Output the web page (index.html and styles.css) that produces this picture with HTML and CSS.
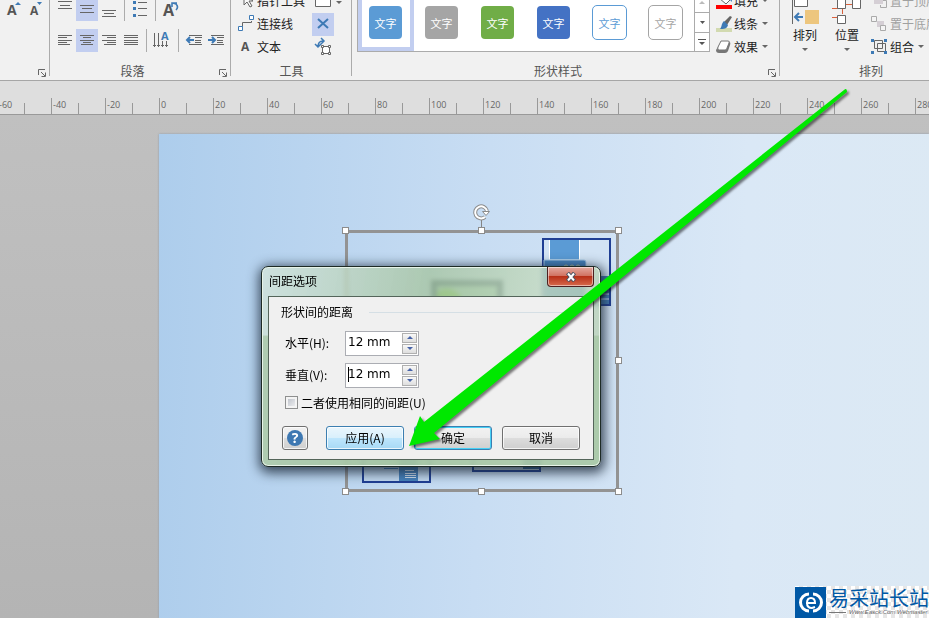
FILE: index.html
```html
<!DOCTYPE html>
<html lang="zh-CN">
<head>
<meta charset="utf-8">
<title>间距选项</title>
<link rel="stylesheet" href="styles.css">
</head>
<body>
<header class="ribbon">
  <section class="group group-font">
    <div class="group-body">
      <div class="row">
        <button class="tool" aria-label="增大字号"><svg width="22" height="23"><text class="glyph" x="5" y="17" font-size="14">A</text><path class="blue" d="M13 7l3-3 3 3z"/></svg></button>
        <button class="tool" aria-label="减小字号"><svg width="22" height="23"><text class="glyph" x="6" y="17" font-size="12">A</text><path class="blue" d="M13 4h5l-2.500 3z"/></svg></button>
      </div>
      <div class="row"></div>
    </div>
    <footer class="group-footer"><span class="group-name"></span><button class="launcher" aria-label="字体设置"><svg width="8" height="8"><path class="line" d="M.5 6V.5H7M3 3l4 4M7.500 3.500v4h-4"/></svg></button></footer>
  </section>

  <section class="group group-paragraph">
    <div class="group-body">
      <div class="row">
        <button class="tool" aria-label="顶端对齐"><svg width="22" height="23"><path class="line" d="M4 3.500h14M6 7.500h10M4 10.500h14"/></svg></button>
        <button class="tool selected" aria-label="中部对齐"><svg width="22" height="23"><path class="line" d="M4 7.500h14M6 10.500h10M4 14.500h14"/></svg></button>
        <button class="tool" aria-label="底端对齐"><svg width="22" height="23"><path class="line" d="M4 12.500h14M6 15.500h10M4 18.500h14"/></svg></button>
        <i class="divider"></i>
        <button class="tool" aria-label="项目符号"><svg width="22" height="23"><path class="line" d="M9 4.500h9M9 10.500h9M9 17.500h9"/><path class="blue" d="M4 3h3v3H4zM4 9h3v3H4zM4 16h3v3H4z"/></svg></button>
        <i class="divider"></i>
        <button class="tool" aria-label="旋转文本"><svg width="22" height="23"><text class="glyph" x="3" y="18" font-size="16">A</text><path d="M16 12c2-2 2-4 0-6l-3-1M12 9V5h5" fill="none" stroke="#3e7ab5" stroke-width="1.600"/></svg></button>
      </div>
      <div class="row">
        <button class="tool" aria-label="左对齐"><svg width="22" height="23"><path class="line" d="M4 6.500h14M4 8.500h9M4 11.500h14M4 13.500h9M4 15.500h12"/></svg></button>
        <button class="tool selected" aria-label="居中"><svg width="22" height="23"><path class="line" d="M4 6.500h14M7 8.500h8M4 11.500h14M7 13.500h8M5 15.500h12"/></svg></button>
        <button class="tool" aria-label="右对齐"><svg width="22" height="23"><path class="line" d="M4 6.500h14M9 8.500h9M4 11.500h14M9 13.500h9M6 15.500h12"/></svg></button>
        <button class="tool" aria-label="两端对齐"><svg width="22" height="23"><path class="line" d="M4 6.500h14M4 8.500h14M4 11.500h14M4 13.500h14M4 15.500h14"/></svg></button>
        <i class="divider"></i>
        <button class="tool" aria-label="文字方向"><svg width="23" height="23"><path class="line" d="M3.500 4v14M7.500 4v14M11.500 12v6M15.500 12v6M2 16.500h3M6 16.500h3M10 16.500h3M14 16.500h3"/><text x="10" y="11" font-size="11" class="glyph-blue">A</text></svg></button>
        <i class="divider"></i>
        <button class="tool" aria-label="减少缩进"><svg width="22" height="23"><path class="line" d="M6 6.500h13M12 8.500h7M12 11.500h6M12 13.500h6M6 15.500h13"/><path d="M11 11H4M7 8l-3 3 3 3" fill="none" stroke="#3e7ab5" stroke-width="2"/></svg></button>
        <button class="tool" aria-label="增加缩进"><svg width="22" height="23"><path class="line" d="M6 6.500h13M12 8.500h7M12 11.500h6M12 13.500h6M6 15.500h13"/><path d="M3 11h7M7 8l3 3-3 3" fill="none" stroke="#3e7ab5" stroke-width="2"/></svg></button>
      </div>
    </div>
    <footer class="group-footer"><span class="group-name">段落</span><button class="launcher" aria-label="段落设置"><svg width="8" height="8"><path class="line" d="M.5 6V.5H7M3 3l4 4M7.500 3.500v4h-4"/></svg></button></footer>
  </section>

  <section class="group group-tools">
    <div class="group-body tools-grid">
      <button class="labelled"><svg width="18" height="22"><path d="M6 4v11l3-3 3 5 2-1-3-5h4z" fill="#f8f8f8" stroke="#666"/></svg>指针工具</button>
      <button class="tool" aria-label="矩形"><svg width="30" height="23"><path d="M3.500 5.500h15v11h-15z" fill="#fff" stroke="#666"/><path d="M24 11h6l-3 3z" fill="#666"/></svg></button>
      <button class="labelled"><svg width="18" height="22"><path class="line" d="M4.500 14V9.500h9V8"/><path d="M.5 13.500h4v4h-4zM11.500 2.500h4v4h-4z" fill="#fff" stroke="#3e7ab5"/></svg>连接线</button>
      <button class="tool selected" aria-label="连接点"><svg width="22" height="23"><path d="M6 6l10 9M16 6L6 15" stroke="#3e7ab5" stroke-width="2"/></svg></button>
      <button class="labelled"><svg width="18" height="22"><text class="glyph" x="3" y="15" font-size="12">A</text></svg>文本</button>
      <button class="tool" aria-label="文本块"><svg width="22" height="23"><path d="M10.500 10.500h7v7h-7z" fill="#fff" stroke="#666"/><path d="M9.500 9.500h2v2h-2zM16.500 9.500h2v2h-2zM9.500 16.500h2v2h-2zM16.500 16.500h2v2h-2z" fill="#fff" stroke="#666"/><path d="M6 11c0-4 1-6 5-6M3 8l3 3 3-3M9 2l3 3-3 3" fill="none" stroke="#3e7ab5" stroke-width="1.500"/></svg></button>
    </div>
    <footer class="group-footer"><span class="group-name">工具</span></footer>
  </section>

  <section class="group group-styles">
    <div class="group-body styles-body">
      <div class="gallery">
        <button class="swatch current"><span class="chip sky">文字</span></button>
        <button class="swatch"><span class="chip gray">文字</span></button>
        <button class="swatch"><span class="chip green">文字</span></button>
        <button class="swatch"><span class="chip blue-fill">文字</span></button>
        <button class="swatch"><span class="chip sky-line">文字</span></button>
        <button class="swatch"><span class="chip gray-line">文字</span></button>
        <div class="gallery-nav">
          <button aria-label="上一行" disabled><svg width="7" height="5"><path d="M0 4h6L3 1z" fill="#bbb"/></svg></button>
          <button aria-label="下一行"><svg width="7" height="5"><path d="M1 1h5L3.500 4z" fill="#555"/></svg></button>
          <button aria-label="其他样式"><svg width="8" height="8"><path d="M0 1h8v1H0zM1 4h6L4 7z" fill="#555"/></svg></button>
        </div>
      </div>
      <div class="stack">
        <button class="labelled"><svg width="20" height="22"><path d="M5 8l6-5 6 6-5 5z" fill="#fff" stroke="#666"/><path d="M14 6q4 0 4 6l-3-3z" class="blue"/><path d="M2 15h16v4H2z" fill="red"/></svg>填充<i class="caret"></i></button>
        <button class="labelled"><svg width="20" height="22"><path d="M2 15h16v4H2z" fill="#d2dab0"/><path d="M16 3l2 1-5 8-3-3z" fill="#666"/><path d="M10 8l4 4c-1 4-4 4-8 4 2-2 1-5 4-8z" class="blue"/></svg>线条<i class="caret"></i></button>
        <button class="labelled"><svg width="20" height="22"><path d="M7 6h8q2 0 1 3l-2 6q-1 2-3 2H5q-3 0-3-3z" fill="#777"/><path d="M7 5h7q2 0 1 2l-2 5q0 2-2 2H5q-2 0-1-3z" fill="#fff" stroke="#777"/></svg>效果<i class="caret"></i></button>
      </div>
    </div>
    <footer class="group-footer"><span class="group-name">形状样式</span><button class="launcher" aria-label="形状样式设置"><svg width="8" height="8"><path class="line" d="M.5 6V.5H7M3 3l4 4M7.500 3.500v4h-4"/></svg></button></footer>
  </section>

  <section class="group group-arrange">
    <div class="group-body arrange-body">
      <button class="big"><svg width="28" height="26"><path class="line" d="M1.500 1v25"/><path d="M3.500 1.500h13v7h-13z" fill="#fff" stroke="#666"/><path d="M14 12h14v14H14z" fill="#edc67e"/><path d="M12 19H5M8 15l-4 4 4 4" fill="none" stroke="#3e7ab5" stroke-width="2"/></svg>排列<i class="caret"></i></button>
      <button class="big"><svg width="32" height="26"><path d="M14 6.500h12M1 10.500h7M11.500 10v6M1 19.500h6" stroke="#d9603b" fill="none"/><path d="M6.500 1.500h8v9h-8zM21.500 1.500h8v9h-8zM6.500 17.500h8v8h-8z" fill="#fff" stroke="#666"/></svg>位置<i class="caret"></i></button>
      <div class="stack">
        <button class="labelled" disabled><svg width="20" height="22"><path d="M4 5h9v9H4z" fill="#d5cfd5"/><path d="M13 10.500h3.500v7h-6V15" fill="none" stroke="#aaa"/></svg>置于顶层</button>
        <button class="labelled" disabled><svg width="20" height="22"><path d="M7 8h7v6H7z" fill="#d5cfd5"/><path d="M1.500 3.500h5v5h-5zM10.500 12.500h5v5h-5z" fill="#f4f4f4" stroke="#aaa"/></svg>置于底层</button>
        <button class="labelled"><svg width="20" height="22"><path d="M4.500 4.500h8v8h-8zM7.500 7.500h8v8h-8z" fill="none" stroke="#666"/><path class="blue" d="M1 3h3v3H1zM14 3h3v3h-3zM1 15h3v3H1zM14 15h3v3h-3z"/></svg>组合<i class="caret"></i></button>
      </div>
    </div>
    <footer class="group-footer"><span class="group-name">排列</span></footer>
  </section>
</header>

<ol class="ruler">
  <li>-60</li><li>-40</li><li>-20</li><li>0</li><li>20</li><li>40</li><li>60</li><li>80</li><li>100</li><li>120</li><li>140</li><li>160</li><li>180</li><li>200</li><li>220</li><li>240</li><li>260</li><li>280</li>
</ol>

<main class="workspace">
  <div class="sheet"></div>
  <svg class="shapes" aria-hidden="true">
    <g transform="translate(0 -115)">
      <path d="M434 283h66v50h-66z" fill="#9cc9b0" stroke="#2c465c" stroke-width="6"/><path d="M437 292q12-8 24 4v8h-24z" fill="#6cc02a"/>
      <path d="M543 239h67v66h-67z" fill="#d2e3f4" stroke="#203f94" stroke-width="2"/>
      <path d="M549.500 240v20h30v-20" fill="#5b9bd5" stroke="#fff"/>
      <path d="M544 260h40q2 0 2 2v42h-42z" fill="#4682bd" stroke="#a9cbe9"/>
      <g fill="none" stroke="#a8ba9b"><circle cx="566" cy="267" r="2"/><circle cx="572" cy="267" r="2"/><circle cx="578" cy="267" r="2"/></g>
      <path d="M599 276h10v28h-10z" fill="#4279b2"/><path d="M600 294h9M600 299h9" stroke="#d5e5f5"/>
      <path d="M363 430h67v52h-67z" fill="#c3daf1" stroke="#203f94" stroke-width="2"/>
      <path d="M399 455h19v26h-19z" fill="#4682bd"/><path d="M384 468.500h14" stroke="#4682bd"/>
      <path d="M405 470.500h9M405 473.500h11M405 475.500h11M405 477.500h11" stroke="#d7e6f5"/>
      <path d="M473 430h67v41h-67z" fill="#c5d8e8" stroke="#203f94" stroke-width="2"/><path d="M523 455h16v14h-16z" fill="#366694"/>
      <path d="M346.500 231.500h271v259h-271z" fill="none" stroke="#939393" stroke-width="3"/>
      <path d="M481.500 218v12" stroke="#858585"/>
      <path d="M485 217a6 6 0 1 1 2-6" fill="none" stroke="#8c8c8c" stroke-width="4"/><path d="M485 217a6 6 0 1 1 2-6" fill="none" stroke="#fff" stroke-width="2"/>
      <path d="M482.500 211.500h7l-3.500 4z" fill="#fff" stroke="#8c8c8c"/>
      <g fill="#fff" stroke="#8c8c8c">
        <rect x="342.500" y="227.500" width="6" height="6"/><rect x="478.500" y="227.500" width="6" height="6"/><rect x="615.500" y="227.500" width="6" height="6"/>
        <rect x="615.500" y="357.500" width="6" height="6"/>
        <rect x="342.500" y="488.500" width="6" height="6"/><rect x="478.500" y="488.500" width="6" height="6"/><rect x="615.500" y="488.500" width="6" height="6"/>
      </g>
    </g>
  </svg>

  <form class="dialog" role="dialog" aria-labelledby="dialog-title">
    <div class="titlebar">
      <h1 id="dialog-title">间距选项</h1>
      <button type="button" class="close" aria-label="关闭"><svg width="12" height="10"><path d="M2.500 1l7 8M9.500 1l-7 8" stroke="#4b5362" stroke-width="4"/><path d="M3 1.500l6 7M9 1.500l-6 7" stroke="#fff" stroke-width="2"/></svg></button>
    </div>
    <div class="client">
      <div class="legend">形状间的距离</div>
      <div class="fields">
        <div class="field">
          <label for="horizontal">水平(H):</label>
          <div class="spin"><input id="horizontal" type="text" value="12 mm"><div class="steps"><button type="button" aria-label="增加水平间距"><svg width="6" height="4"><path d="M0 3h6L3 0z" fill="#4763a8"/></svg></button><button type="button" aria-label="减少水平间距"><svg width="6" height="4"><path d="M0 0h6L3 3z" fill="#4763a8"/></svg></button></div></div>
        </div>
        <div class="field">
          <label for="vertical">垂直(V):</label>
          <div class="spin editing"><input id="vertical" type="text" value="12 mm"><div class="steps"><button type="button" aria-label="增加垂直间距"><svg width="6" height="4"><path d="M0 3h6L3 0z" fill="#4763a8"/></svg></button><button type="button" aria-label="减少垂直间距"><svg width="6" height="4"><path d="M0 0h6L3 3z" fill="#4763a8"/></svg></button></div></div>
        </div>
        <label class="check"><input type="checkbox">二者使用相同的间距(U)</label>
      </div>
      <div class="actions">
        <button type="button" class="button help" aria-label="帮助"><span>?</span></button>
        <button type="button" class="button hot">应用(A)</button>
        <button type="submit" class="button default">确定</button>
        <button type="button" class="button">取消</button>
      </div>
    </div>
  </form>

  <div class="watermark">
    <svg class="mark" width="31" height="31"><path d="M0 0h31v31H0z" fill="#0058a5"/><path d="M14 5.500a10 10 0 0 0 0 20v-3a7 7 0 0 1 0-14zM18 5.500a10 10 0 0 1 0 20v-3a7 7 0 0 0 0-14z" fill="#fff"/><path d="M11 16h9q0-5-4-5t-4 5q0 5 5 5l3-1" fill="none" stroke="#fff" stroke-width="2"/></svg>
    <div class="brand"><strong>易采站长站</strong><small>Www.Easck.Com Webmaster</small></div>
  </div>
</main>

<svg class="pointer" aria-hidden="true"><path d="M409 446L420 416 424 422 844 90Q847 87 847 92L434 433 440 439z" fill="#00e800"/></svg>
</body>
</html>
```

FILE: styles.css
```css
* { box-sizing: border-box; }

body {
  margin: 0;
  height: 100vh;
  display: flex;
  flex-direction: column;
  overflow: hidden;
  position: relative;
  font: 12px/16px "Noto Sans CJK SC", sans-serif;
  color: #222;
}

button, input { font: inherit; color: inherit; }
button { border: 0; padding: 0; background: none; }
svg { display: block; flex: none; }

/* Ribbon */
.ribbon {
  display: flex;
  align-items: flex-end;
  flex: none;
  height: 81px;
  overflow: hidden;
  background: #f1f1f1;
  border-bottom: 1px solid #a6a6a6;
}
.group {
  flex: none;
  position: relative;
  display: flex;
  flex-direction: column;
}
.group::after {
  content: "";
  position: absolute;
  right: 0;
  top: 0;
  bottom: 4px;
  width: 1px;
  background: #ababab;
}
.group-font { width: 50px; }
.group-paragraph { width: 181px; }
.group-tools { width: 121px; }
.group-styles { width: 428px; }
.group-arrange { flex: 1 0 182px; }
.group-body {
  display: flex;
  flex-direction: column;
  gap: 8px;
  height: 64px;
  padding: 0 4px 10px;
}
.group-font .group-body { padding-left: 2px; }
.group-footer {
  display: flex;
  align-items: center;
  height: 18px;
  padding: 0 4px 1px;
}
.group-name { flex: 1; text-align: center; color: #555; }
.launcher { margin: 5px 0 0 8px; }

.row { display: flex; height: 23px; }
.tool { min-width: 22px; height: 23px; }
.selected { background: #c2cef0; }
.divider { width: 1px; margin: 0 4px; background: #ababab; }
.line { fill: none; stroke: #666; }
.blue { fill: #3e7ab5; }
.glyph, .glyph-blue { font-family: "Open Sans", sans-serif; font-weight: 700; fill: #555; }
.glyph-blue { fill: #3e7ab5; }

.labelled {
  display: flex;
  align-items: center;
  height: 23px;
  gap: 1px;
  white-space: nowrap;
}
.labelled:disabled { color: #a0a0a0; }
.caret {
  border: 3px solid transparent;
  border-top-color: #666;
  border-bottom: 0;
}
.labelled .caret { margin-left: 4px; }

.tools-grid {
  display: grid;
  grid-template-columns: 74px 34px;
  grid-auto-rows: 23px;
  align-content: end;
  justify-items: start;
  gap: 0;
  padding: 0 0 4px 7px;
}
.tools-grid .tool { margin-top: 1px; }

.styles-body, .arrange-body { flex-direction: row; align-items: flex-end; gap: 4px; }
.styles-body { padding: 0 0 4px 5px; }
.gallery {
  display: flex;
  flex: none;
  width: 353px;
  height: 60px;
  margin-bottom: 6px;
  background: #fff;
  border: 1px solid #ababab;
}
.swatch { flex: none; width: 56px; height: 58px; border: 4px solid transparent; display: grid; place-items: end center; padding: 0 1px 8px 0; }
.current { border-color: #c2cef0; }
.chip {
  display: grid;
  place-items: center;
  width: 33px;
  height: 33px;
  border-radius: 4px;
  color: #fff;
  font-size: 11px;
}
.sky { background: #5b9bd5; }
.gray { background: #a5a5a5; }
.green { background: #70ad47; }
.blue-fill { background: #4472c4; }
.sky-line { outline: 1px solid #5b9bd5; color: #5b9bd5; }
.gray-line { outline: 1px solid #a5a5a5; color: #a5a5a5; }
.gallery-nav { display: grid; grid-auto-rows: 1fr; flex: 1; border-left: 1px solid #ababab; }
.gallery-nav button { display: grid; place-items: center; }
.gallery-nav button + button { border-top: 1px solid #ababab; }
.stack { display: flex; flex-direction: column; flex: none; }
.stack .labelled { gap: 0; }
.arrange-body { padding: 0 0 4px 10px; gap: 10px; }
.big { display: flex; flex-direction: column; align-items: center; width: 30px; gap: 3px; height: 62px; justify-content: flex-end; padding-bottom: 7px; }
.big + .big { margin-left: 2px; }
.big + .stack { margin-left: -2px; }
.big .caret { margin-top: 2px; }

/* Ruler */
.ruler {
  display: flex;
  flex: none;
  height: 34px;
  margin: 0;
  padding: 17px 0 0;
  overflow: hidden;
  list-style: none;
  background: #dedede;
  border-bottom: 1px solid #999;
  font: 9px/13px "Open Sans", sans-serif;
  color: #666;
}
.ruler li {
  flex: none;
  width: 54px;
  padding-left: 1px;
  border-left: 1px solid #999;
  background: linear-gradient(#999, #999) 26px 5px / 1px 100% no-repeat;
}
.ruler li:first-child { margin-left: -3px; }

/* Drawing area */
.workspace {
  position: relative;
  flex: 1;
  display: flex;
  overflow: hidden;
  padding: 19px 0 0 159px;
  background: linear-gradient(#c0c0c0, #b4b4b4);
}
.sheet {
  flex: 1;
  background: linear-gradient(92deg, #adcdec, #c8ddf3 42%, #dae8f6 75%, #dce9f4);
  box-shadow: 0 0 2px #8c9aa8;
}
.shapes { position: absolute; inset: 0; width: 100%; height: 100%; }

/* Dialog window */
.dialog {
  position: absolute;
  left: 261px;
  top: 151px;
  width: 340px;
  padding: 0 6px 6px;
  border: 1px solid #1d2a25;
  border-radius: 7px;
  background:
    linear-gradient(transparent 34%, #a3c4a0b0 35%),
    linear-gradient(100deg, #d6e6dac0, #a6c4a2cc 45%, #c3d9bfcc 75%, #b9d1b5cc);
  backdrop-filter: blur(2px);
  box-shadow: inset 0 0 0 1px #e8f4e9, 1px 3px 12px 3px #1a2838cc;
  color: #000;
}
.titlebar { display: flex; justify-content: space-between; height: 29px; }
.titlebar h1 { margin: 5px 0 0 1px; font-size: 12px; line-height: 17px; font-weight: 400; }
.close {
  display: grid;
  place-items: center;
  width: 47px;
  height: 20px;
  border: 1px solid #4d2020;
  border-top: 0;
  border-radius: 0 0 4px 4px;
  background: linear-gradient(#e4aaa0, #d0705f 48%, #b83018 50%, #d66a4c);
  box-shadow: inset 0 0 0 1px #ffffff80;
}
.client {
  padding: 8px 11px 9px 12px;
  border: 1px solid #54655a;
  background: #f0f0f0;
}
.legend { display: flex; align-items: center; gap: 16px; height: 14px; }
.legend::after { content: ""; flex: 1; height: 1px; background: #d5dfe5; }
.fields { display: flex; flex-direction: column; gap: 7px; padding: 12px 4px 15px; }
.field { display: flex; align-items: flex-start; }
.field label { width: 60px; line-height: 23px; }
.spin {
  position: relative;
  display: flex;
  width: 74px;
  height: 25px;
  border: 1px solid #abadb3;
  background: #fff;
}
.spin input {
  flex: 1;
  min-width: 0;
  border: 0;
  padding: 0 0 3px 2px;
  outline: 0;
  background: none;
  font: 12px "DejaVu Sans", sans-serif;
}
.editing::before { content: ""; position: absolute; left: 2px; top: 3px; width: 1px; height: 15px; background: #000; }
.steps { display: grid; grid-auto-rows: 1fr; width: 16px; gap: 1px; padding: 1px 1px 1px 0; }
.steps button { display: grid; place-items: center; border: 1px solid #b0b0b0; background: linear-gradient(#f8f8f8, #dedede); }
.check { display: flex; align-items: center; gap: 3px; height: 15px; margin-bottom: 1px; }
.check input {
  appearance: none;
  width: 13px;
  height: 13px;
  margin: 0;
  border: 1px solid #8e8f8f;
  background: linear-gradient(135deg, #b5bac4, #f6f6f6);
  box-shadow: inset 0 0 0 2px #f4f4f4;
}
.actions { display: flex; gap: 10px; padding-left: 1px; }
.button {
  width: 78px;
  height: 24px;
  padding-bottom: 1px;
  border: 1px solid #707070;
  border-radius: 3px;
  background: linear-gradient(#f2f2f2, #ebebeb 49%, #dddddd 50%, #cfcfcf);
  box-shadow: inset 0 0 0 1px #ffffffc0;
}
.hot { border-color: #3c7fb1; background: linear-gradient(#eaf6fd, #d9f0fc 49%, #bee6fd 50%, #a7d9f5); }
.default { border-color: #3c7fb1; box-shadow: inset 0 0 0 1px #46d0f5; }
.help { display: grid; place-items: center; width: 26px; margin-right: 8px; padding: 0; }
.help span {
  width: 16px;
  height: 16px;
  border-radius: 50%;
  background: #3e78b2;
  color: #fff;
  font: 700 14px/16px "Open Sans", sans-serif;
}

/* Watermark */
.watermark {
  position: absolute;
  right: 0;
  bottom: 0;
  display: flex;
  gap: 3px;
  width: 134px;
  height: 32px;
  padding-top: 1px;
  background: repeating-conic-gradient(#e6e6e6 0 25%, #fff 0 50%) 0 0 / 8px 8px;
}
.brand { display: flex; flex-direction: column; white-space: nowrap; color: #0058a5; }
.brand strong { font-size: 20px; line-height: 22px; font-weight: 400; }
.brand small {
  display: flex;
  align-items: center;
  gap: 3px;
  font: italic 6px/7px "Liberation Sans", sans-serif;
  color: #666;
}
.brand small::before { content: ""; width: 17px; height: 1px; background: #777; }

.pointer {
  position: absolute;
  inset: 0;
  width: 100%;
  height: 100%;
  pointer-events: none;
  filter: drop-shadow(2px 2px 1px #00000080);
}
```
